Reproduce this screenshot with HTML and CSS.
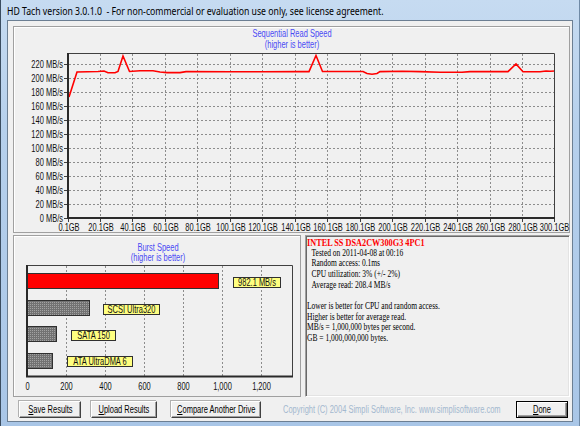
FILE: index.html
```html
<!DOCTYPE html>
<html lang="en">
<head>
<meta charset="utf-8">
<title>HD Tach</title>
<link rel="stylesheet" href="styles.css">
</head>
<body>
<div class="window">
  <div class="titlebar"><span class="title-text">HD Tach version 3.0.1.0  - For non-commercial or evaluation use only, see license agreement.</span></div>
  <div class="client">
    <section class="panel panel-top">
      <svg class="chart" width="555" height="205" viewBox="14 27 555 205">
        <g class="chart-title">
          <text transform="translate(292 37) scale(.75 1)">Sequential Read Speed</text>
          <text transform="translate(292 47.5) scale(.75 1)">(higher is better)</text>
        </g>
        <path class="grid" d="M69 204.5H555M69 190.5H555M69 176.5H555M69 162.5H555M69 148.5H555M69 134.5H555M69 120.5H555M69 106.5H555M69 92.5H555M69 78.5H555M69 64.5H555"/>
        <path class="grid" d="M100.5 54V217M132.5 54V217M165.5 54V217M197.5 54V217M230.5 54V217M262.5 54V217M295.5 54V217M327.5 54V217M360.5 54V217M392.5 54V217M425.5 54V217M457.5 54V217M490.5 54V217M522.5 54V217"/>
        <polyline class="trace" points="69,97 77,72 98,71.5 104,71 108,72.8 115,72.8 118,71.5 123,56 129.5,71.5 140,70.8 153,70.8 160,72 167,72.6 180,72.6 186,71.6 230,71.8 262,71.8 300,71.6 309,71.6 316,55.5 322.5,71.5 340,71.5 363,71.5 367,73.5 372,74.2 377,73.5 380,71.6 402,71.3 420,71.6 440,72.2 462,72.2 470,71.6 493,71.6 508,71.6 516,64 523,71.8 540,71.8 546,71 550,71.3 555,71"/>
        <path class="frame-thin" d="M68 53.5H554.5V218"/>
        <path class="axis" d="M68 53V218H555"/>
        <path class="ticks" d="M64 218.5H67M64 204.5H67M64 190.5H67M64 176.5H67M64 162.5H67M64 148.5H67M64 134.5H67M64 120.5H67M64 106.5H67M64 92.5H67M64 78.5H67M64 64.5H67M68.5 219V222M100.5 219V222M132.5 219V222M165.5 219V222M197.5 219V222M230.5 219V222M262.5 219V222M295.5 219V222M327.5 219V222M360.5 219V222M392.5 219V222M425.5 219V222M457.5 219V222M490.5 219V222M522.5 219V222M554.5 219V222"/>
        <g class="ylabels">
          <text transform="translate(63 221.5) scale(.75 1)">0 MB/s</text>
          <text transform="translate(63 207.5) scale(.75 1)">20 MB/s</text>
          <text transform="translate(63 193.5) scale(.75 1)">40 MB/s</text>
          <text transform="translate(63 179.5) scale(.75 1)">60 MB/s</text>
          <text transform="translate(63 165.5) scale(.75 1)">80 MB/s</text>
          <text transform="translate(63 151.5) scale(.75 1)">100 MB/s</text>
          <text transform="translate(63 137.5) scale(.75 1)">120 MB/s</text>
          <text transform="translate(63 123.5) scale(.75 1)">140 MB/s</text>
          <text transform="translate(63 109.5) scale(.75 1)">160 MB/s</text>
          <text transform="translate(63 95.5) scale(.75 1)">180 MB/s</text>
          <text transform="translate(63 81.5) scale(.75 1)">200 MB/s</text>
          <text transform="translate(63 67.5) scale(.75 1)">220 MB/s</text>
        </g>
        <g class="xlabels">
          <text transform="translate(69 230.5) scale(.75 1)">0.1GB</text>
          <text transform="translate(101 230.5) scale(.75 1)">20.1GB</text>
          <text transform="translate(133 230.5) scale(.75 1)">40.1GB</text>
          <text transform="translate(166 230.5) scale(.75 1)">60.1GB</text>
          <text transform="translate(198 230.5) scale(.75 1)">80.1GB</text>
          <text transform="translate(231 230.5) scale(.75 1)">100.1GB</text>
          <text transform="translate(263 230.5) scale(.75 1)">120.1GB</text>
          <text transform="translate(296 230.5) scale(.75 1)">140.1GB</text>
          <text transform="translate(328 230.5) scale(.75 1)">160.1GB</text>
          <text transform="translate(360.5 230.5) scale(.75 1)">180.1GB</text>
          <text transform="translate(393 230.5) scale(.75 1)">200.1GB</text>
          <text transform="translate(425.5 230.5) scale(.75 1)">220.1GB</text>
          <text transform="translate(458 230.5) scale(.75 1)">240.1GB</text>
          <text transform="translate(490.5 230.5) scale(.75 1)">260.1GB</text>
          <text transform="translate(523 230.5) scale(.75 1)">280.1GB</text>
          <text transform="translate(554.5 230.5) scale(.75 1)">300.1GB</text>
        </g>
      </svg>
    </section>
    <div class="lower">
      <section class="panel panel-burst">
        <svg class="chart" width="286" height="160" viewBox="14 236 286 160">
          <defs>
            <pattern id="dots" width="2" height="2" patternUnits="userSpaceOnUse">
              <rect width="2" height="2" fill="#727272"/>
              <rect width="1" height="1" fill="#a2a2a2"/>
            </pattern>
          </defs>
          <g class="chart-title">
            <text transform="translate(158 250.5) scale(.75 1)">Burst Speed</text>
            <text transform="translate(158 261) scale(.75 1)">(higher is better)</text>
          </g>
          <path class="grid" d="M66.5 266V376M105.5 266V376M144.5 266V376M183.5 266V376M222.5 266V376M261.5 266V376"/>
          <rect class="bar bar-red" x="27.5" y="273.5" width="191" height="15"/>
          <rect class="bar bar-gray" x="27.5" y="300.5" width="62" height="15"/>
          <rect class="bar bar-gray" x="27.5" y="326.5" width="29" height="15"/>
          <rect class="bar bar-gray" x="27.5" y="353.5" width="25" height="15"/>
          <path class="frame-thin" d="M27 265.5H292.5V377"/>
          <path class="axis" d="M27 265V376.5H293"/>
          <g class="tag">
            <rect x="233.5" y="277.5" width="47" height="10"/>
            <text transform="translate(257 286) scale(.75 1)">982.1 MB/s</text>
            <rect x="103.5" y="304.5" width="56" height="10"/>
            <text transform="translate(131.5 313) scale(.75 1)">SCSI Ultra320</text>
            <rect x="71.5" y="330.5" width="44" height="10"/>
            <text transform="translate(93.5 339) scale(.75 1)">SATA 150</text>
            <rect x="67.5" y="356.5" width="65" height="10"/>
            <text transform="translate(100 365) scale(.75 1)">ATA UltraDMA 6</text>
          </g>
          <g class="xlabels">
            <text transform="translate(27.5 390) scale(.75 1)">0</text>
            <text transform="translate(66.5 390) scale(.75 1)">200</text>
            <text transform="translate(105.5 390) scale(.75 1)">400</text>
            <text transform="translate(144.5 390) scale(.75 1)">600</text>
            <text transform="translate(183.5 390) scale(.75 1)">800</text>
            <text transform="translate(222.5 390) scale(.75 1)">1,000</text>
            <text transform="translate(261.5 390) scale(.75 1)">1,200</text>
          </g>
        </svg>
      </section>
      <div class="infobox">
        <div class="info-text">
          <p class="drive">INTEL SS DSA2CW300G3 4PC1</p>
          <p class="indent">Tested on 2011-04-08 at 00:16</p>
          <p class="indent">Random access: 0.1ms</p>
          <p class="indent">CPU utilization: 3% (+/- 2%)</p>
          <p class="indent">Average read: 208.4 MB/s</p>
          <p class="gap">Lower is better for CPU and random access.</p>
          <p>Higher is better for average read.</p>
          <p>MB/s = 1,000,000 bytes per second.</p>
          <p>GB = 1,000,000,000 bytes.</p>
        </div>
      </div>
    </div>
    <div class="actions">
      <button class="btn btn-save"><span class="btn-label"><u>S</u>ave Results</span></button>
      <button class="btn btn-upload"><span class="btn-label"><u>U</u>pload Results</span></button>
      <button class="btn btn-compare"><span class="btn-label"><u>C</u>ompare Another Drive</span></button>
      <div class="copyright"><span class="copyright-text">Copyright (C) 2004 Simpli Software, Inc. www.simplisoftware.com</span></div>
      <button class="btn btn-done"><span class="btn-label"><u>D</u>one</span></button>
    </div>
  </div>
</div>
</body>
</html>
```

FILE: styles.css
```css
html, body {
  margin: 0;
  padding: 0;
}

body {
  width: 580px;
  height: 426px;
  overflow: hidden;
  background: linear-gradient(180deg, #c6dbf1 0, #b6d0ec 30%, #a9c6e7 100%);
  box-shadow: inset 1px 0 0 #3b4d60, inset -1px 0 0 #6f8aa6;
  font-family: "Liberation Sans", Arial, sans-serif;
}

.window {
  display: flex;
  flex-direction: column;
  height: 426px;
}

.titlebar {
  height: 20px;
  padding-left: 7px;
  display: flex;
  align-items: center;
}

.title-text {
  display: inline-block;
  white-space: pre;
  font: 11px "Noto Sans", "Liberation Sans", sans-serif;
  color: #000;
  transform: scaleX(.79);
  transform-origin: 0 50%;
}

.client {
  margin: 0 7px;
  height: 402px;
  box-sizing: border-box;
  border: 1px solid #6c7f93;
  background: #f0f0f0;
  padding: 5px 2px 0 5px;
  display: flex;
  flex-direction: column;
}

.panel {
  box-sizing: border-box;
  border: 1px solid #a0a0a0;
  box-shadow: inset 1px 1px 0 #fff;
  background: #f0f0f0;
}

.panel-top {
  width: 557px;
  height: 207px;
}

.chart {
  display: block;
  overflow: visible;
}

.chart text {
  font: 10px "Liberation Sans", Arial, sans-serif;
  fill: #111;
}

.chart .chart-title text {
  fill: #4a4af4;
  text-anchor: middle;
}

.ylabels text {
  text-anchor: end;
}

.xlabels text {
  text-anchor: middle;
}

.grid {
  fill: none;
  stroke: #8c8c8c;
  stroke-width: 1;
  stroke-dasharray: 2 2;
}

.trace {
  fill: none;
  stroke: #ff0000;
  stroke-width: 1.6;
  stroke-linejoin: miter;
}

.frame-thin {
  fill: none;
  stroke: #404040;
  stroke-width: 1;
}

.axis {
  fill: none;
  stroke: #2a2a2a;
  stroke-width: 2;
}

.ticks {
  fill: none;
  stroke: #404040;
  stroke-width: 1;
}

.bar {
  stroke: #303030;
  stroke-width: 1;
}

.bar-red {
  fill: #ff0000;
}

.bar-gray {
  fill: url(#dots);
}

.tag rect {
  fill: #ffff80;
  stroke: #303030;
  stroke-width: 1;
}

.tag text {
  text-anchor: middle;
}

.lower {
  display: flex;
  gap: 4px;
  margin-top: 2px;
  height: 162px;
}

.panel-burst {
  width: 288px;
  height: 162px;
}

.infobox {
  width: 265px;
  height: 162px;
  box-sizing: border-box;
  border: 1px solid;
  border-color: #a0a0a0 #ffffff #ffffff #a0a0a0;
  box-shadow: inset 1px 1px 0 #696969, inset -1px -1px 0 #e3e3e3;
  padding: 1px 0 0 1px;
  overflow: hidden;
  background: #f0f0f0;
}

.info-text {
  width: 340px;
  transform: scaleX(.75);
  transform-origin: 0 0;
  font: 10px/10.67px "Liberation Serif", "Times New Roman", serif;
  color: #000;
}

.info-text p {
  margin: 0;
  white-space: pre;
}

.info-text .drive {
  color: #ff0000;
  font-weight: bold;
  font-size: 11px;
}

.info-text .indent {
  padding-left: 6px;
}

.info-text .gap {
  margin-top: 10.67px;
}

.actions {
  display: flex;
  align-items: center;
  margin-top: 4px;
  height: 17px;
}

.btn {
  box-sizing: border-box;
  height: 17px;
  padding: 0;
  margin: 0;
  border: 1px solid;
  border-color: #ffffff #404040 #404040 #ffffff;
  box-shadow: inset -1px -1px 0 #a0a0a0, -1px -1px 0 #b0b0b0;
  background: #f0f0f0;
  font: 10px "Liberation Sans", Arial, sans-serif;
  color: #000;
  display: flex;
  align-items: center;
  justify-content: center;
  flex: none;
}

.btn-label {
  display: inline-block;
  white-space: nowrap;
  transform: scaleX(.75);
}

.btn-save {
  width: 62px;
  margin-left: 6px;
}

.btn-upload {
  width: 66px;
  margin-left: 10px;
}

.btn-compare {
  width: 90px;
  margin-left: 14px;
}

.copyright {
  width: 220px;
  margin-left: 22px;
  flex: none;
  white-space: nowrap;
  font-size: 10px;
  color: #a3b8cf;
}

.copyright-text {
  display: inline-block;
  transform: scaleX(.75);
  transform-origin: 0 50%;
}

.btn-done {
  width: 52px;
  margin-left: auto;
  margin-right: 2px;
  border-color: #000;
  box-shadow: inset 1px 1px 0 #fff, inset -1px -1px 0 #696969, inset -2px -2px 0 #a0a0a0;
}
```
